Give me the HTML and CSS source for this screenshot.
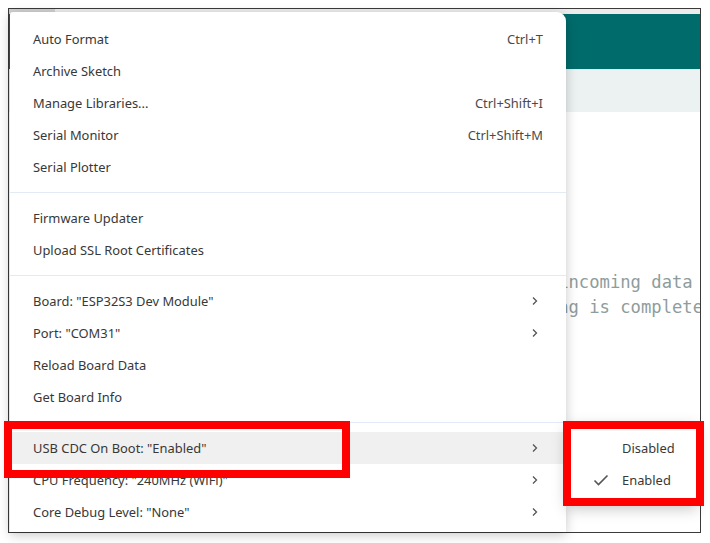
FILE: index.html
```html
<!DOCTYPE html>
<html>
<head>
<meta charset="utf-8">
<link rel="stylesheet" href="styles.css">
</head>
<body>
<div class="frame">
  <div class="tabstrip"><span class="tab"></span></div>
  <div class="header"></div>
  <div class="toolbar"></div>
  <div class="editor">
    <div class="code">
      <div class="line">// Wait for incoming data</div>
      <div class="line">// Downloading is complete</div>
    </div>
  </div>
</div>

<div class="menu">
  <div class="item"><span>Auto Format</span><span class="sc">Ctrl+T</span></div>
  <div class="item"><span>Archive Sketch</span></div>
  <div class="item"><span>Manage Libraries...</span><span class="sc">Ctrl+Shift+I</span></div>
  <div class="item"><span>Serial Monitor</span><span class="sc">Ctrl+Shift+M</span></div>
  <div class="item"><span>Serial Plotter</span></div>
  <div class="sep"></div>
  <div class="item"><span>Firmware Updater</span></div>
  <div class="item"><span>Upload SSL Root Certificates</span></div>
  <div class="sep"></div>
  <div class="item"><span>Board: "ESP32S3 Dev Module"</span><svg class="chev" width="8" height="10" viewBox="0 0 8 10"><path d="M2 1.5 L5.5 5 L2 8.5" fill="none" stroke="#555" stroke-width="1.3"/></svg></div>
  <div class="item"><span>Port: "COM31"</span><svg class="chev" width="8" height="10" viewBox="0 0 8 10"><path d="M2 1.5 L5.5 5 L2 8.5" fill="none" stroke="#555" stroke-width="1.3"/></svg></div>
  <div class="item"><span>Reload Board Data</span></div>
  <div class="item"><span>Get Board Info</span></div>
  <div class="sep"></div>
  <div class="item active"><span>USB CDC On Boot: "Enabled"</span><svg class="chev" width="8" height="10" viewBox="0 0 8 10"><path d="M2 1.5 L5.5 5 L2 8.5" fill="none" stroke="#555" stroke-width="1.3"/></svg></div>
  <div class="item"><span>CPU Frequency: "240MHz (WiFi)"</span><svg class="chev" width="8" height="10" viewBox="0 0 8 10"><path d="M2 1.5 L5.5 5 L2 8.5" fill="none" stroke="#555" stroke-width="1.3"/></svg></div>
  <div class="item"><span>Core Debug Level: "None"</span><svg class="chev" width="8" height="10" viewBox="0 0 8 10"><path d="M2 1.5 L5.5 5 L2 8.5" fill="none" stroke="#555" stroke-width="1.3"/></svg></div>
</div>

<div class="submenu">
  <div class="subitem"><span class="check"></span><span>Disabled</span></div>
  <div class="subitem"><span class="check"><svg width="16" height="12" viewBox="0 0 16 12"><path d="M1.5 6.5 L5.5 10.5 L14.5 1.5" fill="none" stroke="#555" stroke-width="1.6"/></svg></span><span>Enabled</span></div>
</div>

<div class="mark mark-left"></div>
<div class="mark mark-right"></div>
</body>
</html>
```

FILE: styles.css
```css
html, body {
  margin: 0;
  padding: 0;
  background: #ffffff;
}
body {
  width: 710px;
  height: 543px;
  padding: 8px;
  box-sizing: border-box;
  position: relative;
  overflow: hidden;
  font-family: "Noto Sans", "Open Sans", sans-serif;
}
.frame {
  width: 693px;
  height: 525px;
  border: 1.5px solid #3a3a3a;
  box-sizing: border-box;
  display: flex;
  flex-direction: column;
  overflow: hidden;
}
.tabstrip {
  height: 5px;
  background: #ececec;
  display: flex;
}
.tab {
  width: 46px;
  background: #cfcfcf;
}
.header {
  height: 55px;
  background: #006b6b;
}
.toolbar {
  height: 42px;
  background: #ecf1f1;
  border-top: 1px solid #e3e9e9;
}
.editor {
  flex: 1;
  background: #ffffff;
  overflow: hidden;
}
.code {
  padding-top: 158px;
  margin-left: 425px;
  font-family: "DejaVu Sans Mono", "Liberation Mono", monospace;
  font-size: 17.2px;
  line-height: 25px;
  color: #8e9c9c;
}
.line {
  white-space: pre;
}

.menu {
  position: absolute;
  left: 10px;
  top: 12px;
  width: 556px;
  height: 520px;
  background: #ffffff;
  border-radius: 3px 9px 0 0;
  box-shadow: 0 3px 12px rgba(0, 0, 0, 0.22);
  padding-top: 11px;
  box-sizing: border-box;
  font-size: 12.9px;
  color: #383838;
}
.item {
  height: 32px;
  display: flex;
  align-items: center;
  justify-content: space-between;
  padding: 0 23px;
}
.item.active {
  background: #f0f0f0;
}
.sc {
  color: #4a4a4a;
}
.chev {
  margin-right: 4px;
}
.sep {
  height: 1px;
  margin: 9px 0;
  background: #e2eaf6;
}

.submenu {
  position: absolute;
  left: 567px;
  top: 424px;
  width: 130px;
  padding: 8px 0;
  background: #ffffff;
  box-shadow: 0 4px 14px rgba(0, 0, 0, 0.25);
  font-size: 12.9px;
  color: #383838;
}
.subitem {
  height: 32px;
  display: flex;
  align-items: center;
  padding-left: 26px;
}
.check {
  width: 29px;
  display: flex;
  align-items: center;
}

.mark {
  position: absolute;
  border: 8px solid #ff0000;
  box-sizing: border-box;
}
.mark-left {
  left: 4px;
  top: 421px;
  width: 346px;
  height: 57px;
}
.mark-right {
  left: 563px;
  top: 421px;
  width: 141px;
  height: 85px;
}
```
